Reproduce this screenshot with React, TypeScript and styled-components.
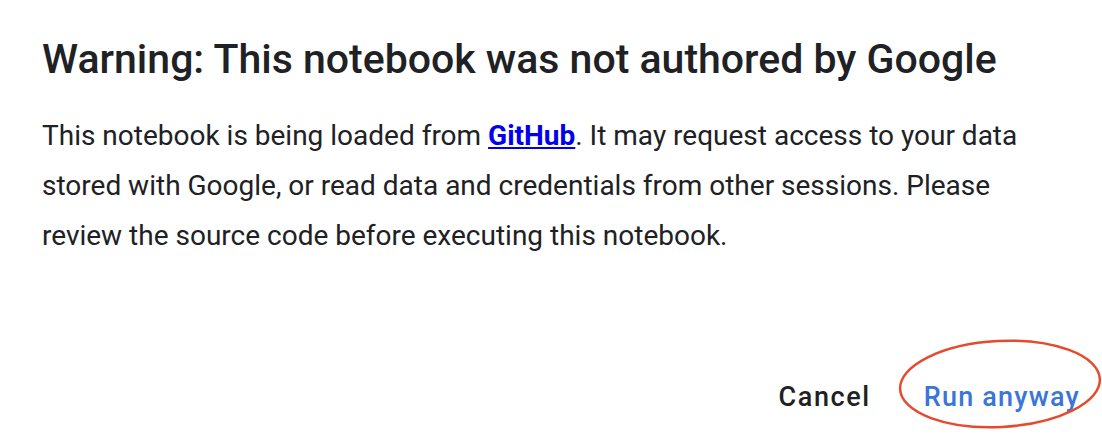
import React from 'react'
import styled, { createGlobalStyle } from 'styled-components'

const Global = createGlobalStyle`
html, body {
  margin: 0;
  padding: 0;
  background: #ffffff;
}
body {
  font-family: Roboto, "Liberation Sans", Arial, sans-serif;
  color: #202124;
}
`

const Dialog = styled.div`
width: 1102px;
height: 434px;
box-sizing: border-box;
padding: 35px 0 0 42px;
display: flex;
flex-direction: column;
overflow: hidden;
`

const Title = styled.h1`
margin: 0;
font-size: 41px;
font-weight: 500;
line-height: 48px;
color: #202124;
white-space: nowrap;
`

const Body = styled.p`
margin: 28px 0 0 0;
font-size: 28px;
font-weight: 400;
line-height: 50px;
width: 1000px;
color: #202124;
`

const Link = styled.a`
color: #0000ee;
font-weight: 700;
text-decoration: underline;
`

const Actions = styled.div`
margin-top: auto;
display: flex;
justify-content: flex-end;
align-items: center;
gap: 53px;
padding: 0 22px 19px 0;
`

const Button = styled.button<{ $primary?: boolean }>`
position: relative;
border: none;
background: none;
padding: 0;
font-family: Roboto, "Liberation Sans", Arial, sans-serif;
font-size: 27px;
line-height: 36px;
font-weight: 500;
letter-spacing: ${p => (p.$primary ? '1.2px' : '1.6px')};
color: ${p => (p.$primary ? '#3a76d9' : '#202124')};
cursor: pointer;
`

const Circle = styled.svg`
position: absolute;
left: -26px;
top: -40px;
width: 204px;
height: 90px;
overflow: visible;
pointer-events: none;
`

function App() {
  return (
    <>
      <Global />
      <Dialog>
        <Title>Warning: This notebook was not authored by Google</Title>
        <Body>
          This notebook is being loaded from <Link href="#">GitHub</Link>. It may request access to your data
          stored with Google, or read data and credentials from other sessions. Please review the source
          code before executing this notebook.
        </Body>
        <Actions>
          <Button>Cancel</Button>
          <Button $primary>
            Run anyway
            <Circle viewBox="0 0 204 90">
              <ellipse cx="102" cy="45" rx="100" ry="43" fill="none" stroke="#e64a2e" strokeWidth="2.5" transform="rotate(-3 102 45)" />
            </Circle>
          </Button>
        </Actions>
      </Dialog>
    </>
  )
}

export default App
